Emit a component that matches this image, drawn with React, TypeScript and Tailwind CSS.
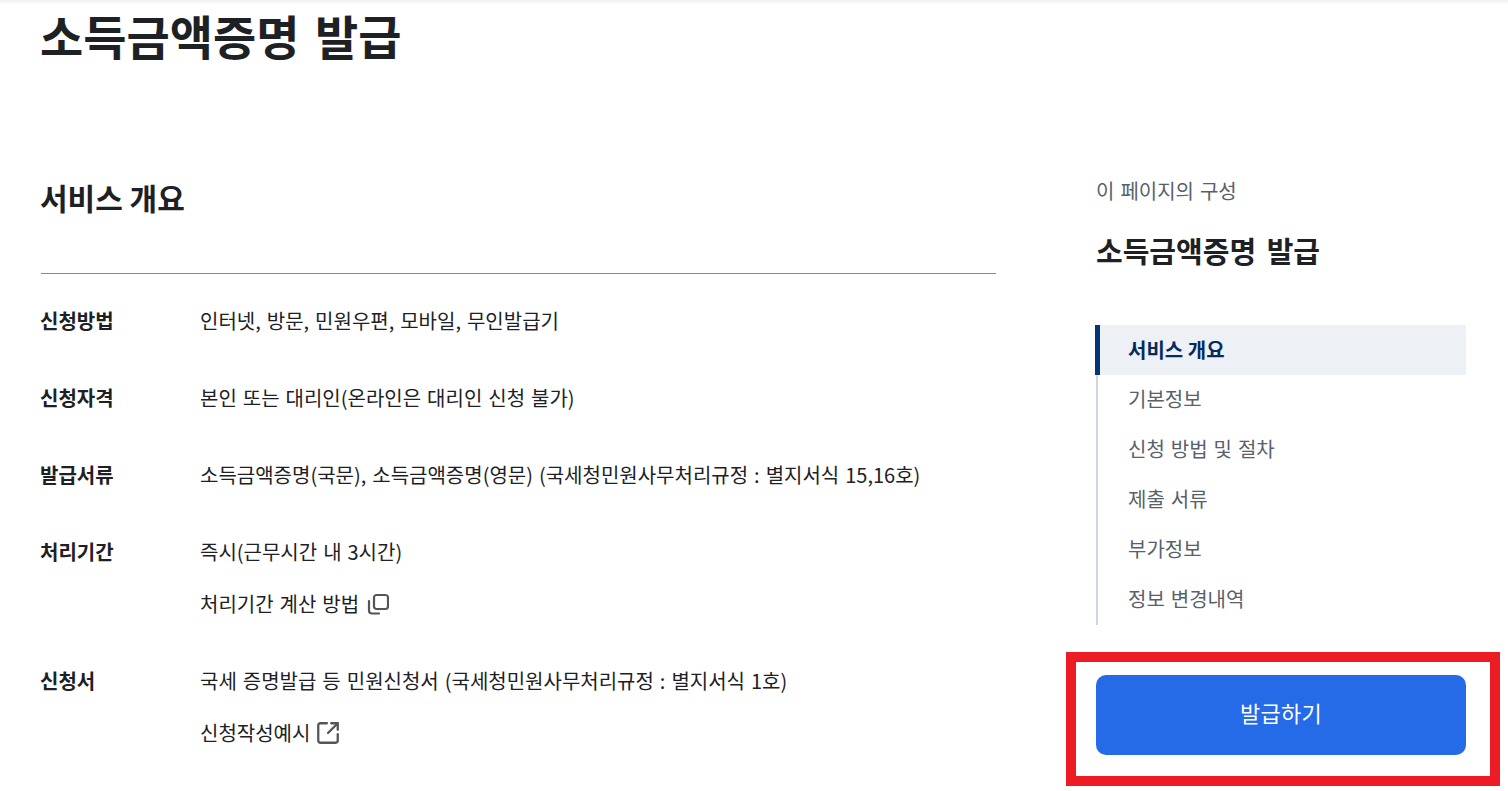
import { SquareArrowOutUpRight } from "lucide-react";

const toc = ["기본정보", "신청 방법 및 절차", "제출 서류", "부가정보", "정보 변경내역"];

function CopyIcon() {
  return (
    <svg width="22" height="22" viewBox="0 0 22 22" fill="none" stroke="#555" strokeWidth="2.2">
      <rect x="7" y="2" width="14" height="14" rx="2.500" />
      <path d="M2 8v9.500a3 3 0 0 0 3 3h7" strokeLinecap="round" />
    </svg>
  );
}

function Row({ label, lines }: { label: string; lines: React.ReactNode[] }) {
  return (
    <div className="flex">
      <div className="w-[160px] shrink-0 text-[20px] leading-[28px] font-bold text-[#1e2124]">{label}</div>
      <div className="flex flex-col gap-[24px]">
        {lines.map((line, i) => (
          <div
            key={i}
            className="flex items-center gap-[8px] text-[20px] leading-[28px] text-[#1e2124] [word-spacing:1.5px]"
          >
            {line}
          </div>
        ))}
      </div>
    </div>
  );
}

export default function App() {
  return (
    <div className="relative h-[791px] overflow-hidden bg-white font-['Noto_Sans_CJK_KR',sans-serif]">
      <div className="h-[5px] bg-gradient-to-b from-[#f0f0f0] to-white" />
      <div className="flex pl-[40px]">
        <main className="w-[956px]">
          <h1 className="text-[47px] leading-[60px] font-bold text-[#1e2124] [word-spacing:5px]">소득금액증명 발급</h1>
          <h2 className="mt-[110px] text-[30px] leading-[44px] font-bold text-[#1e2124]">서비스 개요</h2>
          <div className="mt-[54px] ml-[1px] border-t border-[#8a8a8a]" />
          <div className="mt-[33px] flex flex-col gap-[49px]">
            <Row label="신청방법" lines={["인터넷, 방문, 민원우편, 모바일, 무인발급기"]} />
            <Row label="신청자격" lines={["본인 또는 대리인(온라인은 대리인 신청 불가)"]} />
            <Row label="발급서류" lines={["소득금액증명(국문), 소득금액증명(영문) (국세청민원사무처리규정 : 별지서식 15,16호)"]} />
            <Row
              label="처리기간"
              lines={[
                "즉시(근무시간 내 3시간)",
                <>
                  처리기간 계산 방법 <CopyIcon />
                </>,
              ]}
            />
            <Row
              label="신청서"
              lines={[
                "국세 증명발급 등 민원신청서 (국세청민원사무처리규정 : 별지서식 1호)",
                <>
                  신청작성예시 <SquareArrowOutUpRight size={26} color="#555" strokeWidth={2.1} className="-ml-[3px]" />
                </>,
              ]}
            />
          </div>
        </main>
        <aside className="ml-[100px] w-[370px] pt-[172px]">
          <div className="text-[20px] leading-[28px] text-[#58616a] [word-spacing:1.5px]">이 페이지의 구성</div>
          <div className="mt-[25px] text-[29px] leading-[40px] font-bold text-[#1e2124] [word-spacing:4px]">소득금액증명 발급</div>
          <nav className="mt-[55px] border-l-2 border-[#cdd6e0]">
            <div className="-ml-[3px] flex h-[50px] items-center border-l-[5px] border-[#003675] bg-[#edf0f4] pl-[28px] text-[20px] font-bold text-[#052b5e]">
              서비스 개요
            </div>
            {toc.map((item) => (
              <div key={item} className="flex h-[50px] items-center pb-[2px] pl-[30px] text-[20px] text-[#58616a] [word-spacing:1.5px]">
                {item}
              </div>
            ))}
          </nav>
          <button className="mt-[50px] flex h-[80px] w-full items-center justify-center rounded-[10px] bg-[#256ae6] pb-[5px] text-[22px] tracking-[0.3px] text-white">
            발급하기
          </button>
        </aside>
      </div>
      <div className="absolute top-[652px] left-[1066px] h-[134px] w-[434px] border-[10px] border-[#ed1c24]" />
    </div>
  );
}
